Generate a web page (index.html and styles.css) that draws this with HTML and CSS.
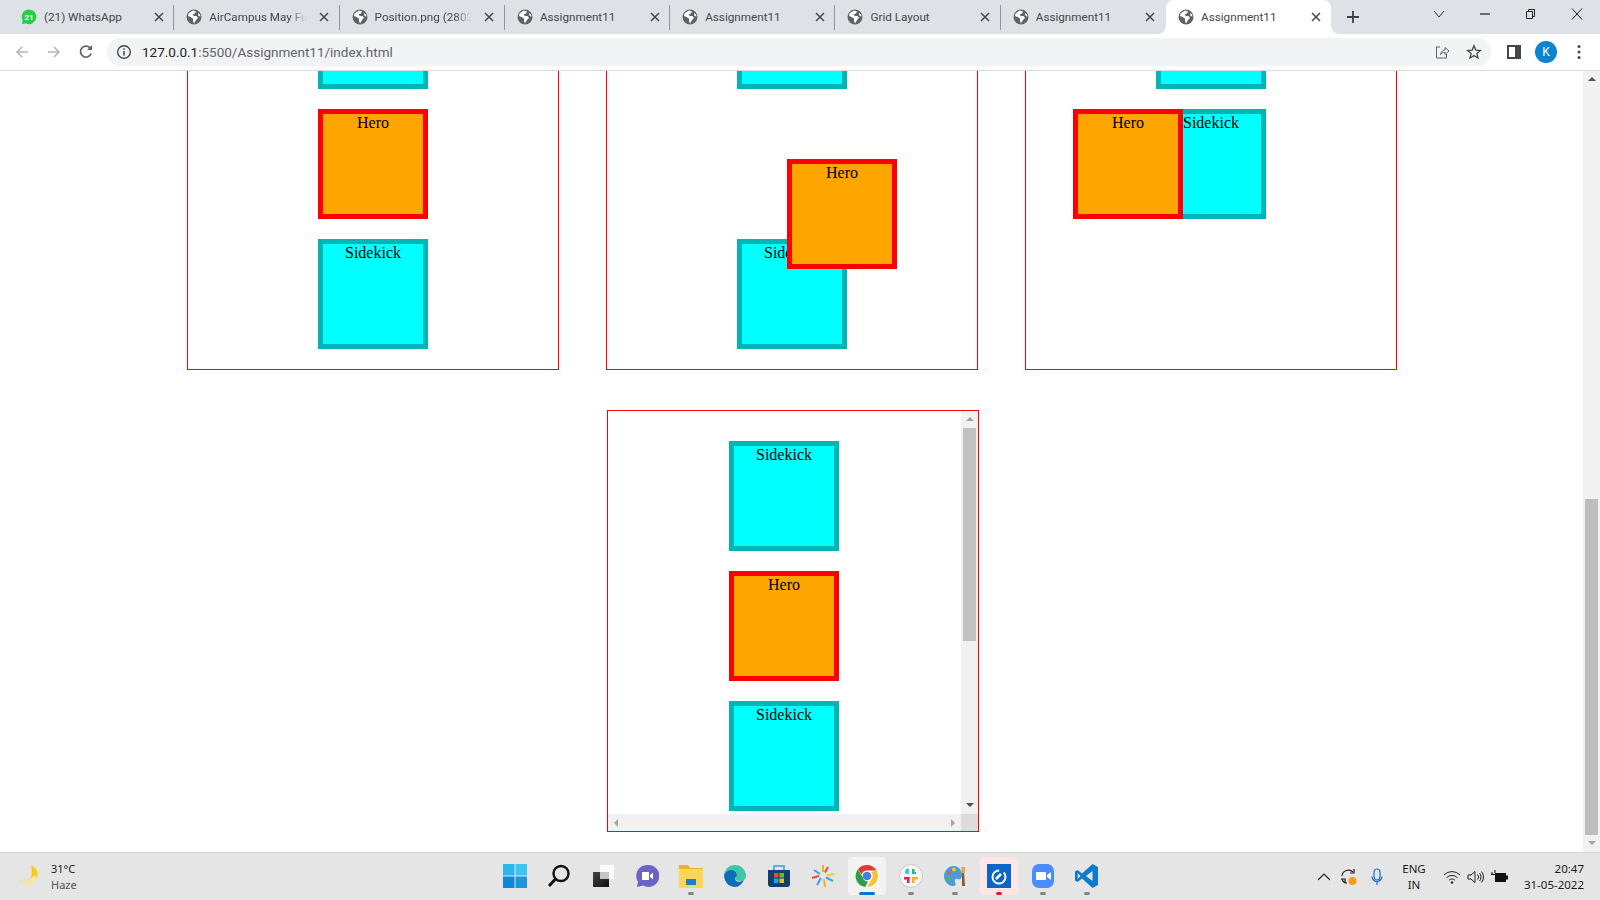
FILE: index.html
```html
<!DOCTYPE html>
<html lang="en">
<head>
    <meta charset="UTF-8">
    <meta name="viewport" content="width=device-width, initial-scale=1.0">
    <title>Assignment11</title>
    <link rel="stylesheet" href="styles.css">
</head>
<body>
    <svg class="defs" width="0" height="0">
        <symbol id="globe" viewBox="0 0 16 16">
            <circle cx="8" cy="8" r="7.5" fill="#5f6368"/>
            <path d="M7 1.5 4.5 3 2.500 4.500 2 7l2.500 1L7 9.500V12l1 2.500L10 11l2-2-1.500-2H8L6.500 5.500 9 4.500 10 2.500z" fill="#fff"/>
            <path d="M12 4l2 1.500.5 2L12.500 7z" fill="#fff"/>
        </symbol>
        <symbol id="close" viewBox="0 0 10 10">
            <path d="M1 1l8 8M9 1l-8 8" stroke="#45474a" stroke-width="1.500" fill="none"/>
        </symbol>
    </svg>

    <!-- Tab strip -->
    <div class="tabstrip">
        <div class="tab">
            <svg class="favicon" viewBox="0 0 16 16"><path d="M8 .5a7.300 7.300 0 0 0-6.300 11L.8 15.300l3.900-1A7.300 7.300 0 1 0 8 .5z" fill="#25cf43"/><text x="8" y="11" class="wa-count">21</text></svg>
            <span class="tab-title">(21) WhatsApp</span>
            <svg class="tab-close"><use href="#close"/></svg>
        </div>
        <div class="tab">
            <svg class="favicon"><use href="#globe"/></svg>
            <span class="tab-title fade">AirCampus May Full Stack</span>
            <svg class="tab-close"><use href="#close"/></svg>
        </div>
        <div class="tab">
            <svg class="favicon"><use href="#globe"/></svg>
            <span class="tab-title fade">Position.png (2802×1608)</span>
            <svg class="tab-close"><use href="#close"/></svg>
        </div>
        <div class="tab">
            <svg class="favicon"><use href="#globe"/></svg>
            <span class="tab-title">Assignment11</span>
            <svg class="tab-close"><use href="#close"/></svg>
        </div>
        <div class="tab">
            <svg class="favicon"><use href="#globe"/></svg>
            <span class="tab-title">Assignment11</span>
            <svg class="tab-close"><use href="#close"/></svg>
        </div>
        <div class="tab">
            <svg class="favicon"><use href="#globe"/></svg>
            <span class="tab-title">Grid Layout</span>
            <svg class="tab-close"><use href="#close"/></svg>
        </div>
        <div class="tab no-sep">
            <svg class="favicon"><use href="#globe"/></svg>
            <span class="tab-title">Assignment11</span>
            <svg class="tab-close"><use href="#close"/></svg>
        </div>
        <div class="tab active">
            <svg class="favicon"><use href="#globe"/></svg>
            <span class="tab-title">Assignment11</span>
            <svg class="tab-close"><use href="#close"/></svg>
        </div>
        <svg class="newtab" viewBox="0 0 14 14"><path d="M7 1v12M1 7h12" stroke="#3c4043" stroke-width="1.800"/></svg>
        <div class="window-btns">
            <svg class="win-btn" viewBox="0 0 46 16"><path d="M18 5l5 6 5-6" stroke="#333" fill="none"/></svg>
            <svg class="win-btn" viewBox="0 0 46 16"><path d="M18 8h10" stroke="#222" stroke-width="1.200"/></svg>
            <svg class="win-btn" viewBox="0 0 46 16"><path d="M18.500 5.500h6v7h-6zM20.500 5.500v-2h6v7h-2" stroke="#222" fill="none"/></svg>
            <svg class="win-btn" viewBox="0 0 46 16"><path d="M18 2.500l10 11M28 2.500l-10 11" stroke="#222" fill="none"/></svg>
        </div>
    </div>

    <!-- Address bar -->
    <div class="toolbar">
        <svg class="tool" viewBox="0 0 16 16"><path d="M14 8H3M8 3L3 8l5 5" stroke="#b4b6b9" stroke-width="1.600" fill="none"/></svg>
        <svg class="tool" viewBox="0 0 16 16"><path d="M2 8h11M8 3l5 5-5 5" stroke="#b4b6b9" stroke-width="1.600" fill="none"/></svg>
        <svg class="tool" viewBox="0 0 16 16"><path d="M13.200 9.500A5.500 5.500 0 1 1 12 3.800" stroke="#5f6368" stroke-width="1.700" fill="none"/><path d="M14 1v5H9z" fill="#5f6368"/></svg>
        <div class="omnibox">
            <svg class="info" viewBox="0 0 16 16"><circle cx="8" cy="8" r="6.300" stroke="#45474a" stroke-width="1.400" fill="none"/><path d="M8 7v4.500M8 4.300v1.500" stroke="#45474a" stroke-width="1.500"/></svg>
            <span class="url"><span class="host">127.0.0.1</span>:5500/Assignment11/index.html</span>
            <svg class="omni-icon" viewBox="0 0 16 16"><path d="M6 3H2.500v11h10V10M6.500 10.500C7 7.500 9 6 11 6V3.500L15 7l-4 3.500V8.500c-2 0-3.500.5-4.500 2z" stroke="#5f6368" fill="none"/></svg>
            <svg class="omni-icon" viewBox="0 0 16 16"><path d="M8 1.800l1.800 4.300 4.600.4-3.500 3 1.100 4.500L8 11.600 4 14l1.100-4.500-3.500-3 4.600-.4z" stroke="#45474a" stroke-width="1.300" fill="none"/></svg>
        </div>
        <svg class="panel-icon" viewBox="0 0 14 14"><path d="M1 1h12v12H1z" fill="none" stroke="#45474a" stroke-width="2"/><path d="M8 1h5v12H8z" fill="#45474a"/></svg>
        <div class="avatar">K</div>
        <svg class="menu" viewBox="0 0 4 16"><circle cx="2" cy="2.500" r="1.500"/><circle cx="2" cy="8" r="1.500"/><circle cx="2" cy="13.500" r="1.500"/></svg>
    </div>

    <!-- Page area -->
    <div class="viewport">
        <main class="page">
            <div class="row">
                <section class="panel">
                    <div class="box sidekick">Sidekick</div>
                    <div class="box hero">Hero</div>
                    <div class="box sidekick">Sidekick</div>
                </section>
                <section class="panel">
                    <div class="box sidekick">Sidekick</div>
                    <div class="box hero hero-relative">Hero</div>
                    <div class="box sidekick">Sidekick</div>
                </section>
                <section class="panel">
                    <div class="box sidekick">Sidekick</div>
                    <div class="box hero hero-absolute">Hero</div>
                    <div class="box sidekick">Sidekick</div>
                </section>
            </div>
            <div class="row row-second">
                <section class="panel panel-scroll">
                    <div class="scroll-content">
                        <div class="box sidekick">Sidekick</div>
                        <div class="box hero">Hero</div>
                        <div class="box sidekick">Sidekick</div>
                    </div>
                    <div class="mini-vbar">
                        <span class="arrow up light"></span>
                        <div class="mini-track"><div class="mini-thumb"></div></div>
                        <span class="arrow down dark"></span>
                    </div>
                    <div class="mini-hbar">
                        <span class="arrow left"></span>
                        <span class="arrow right"></span>
                    </div>
                    <div class="mini-corner"></div>
                </section>
            </div>
        </main>
        <div class="scrollbar">
            <span class="arrow up dark"></span>
            <div class="scroll-track"><div class="scroll-thumb"></div></div>
            <span class="arrow down light"></span>
        </div>
    </div>

    <!-- Windows taskbar -->
    <footer class="taskbar">
        <div class="weather">
            <svg class="moon" viewBox="0 0 24 24"><path d="M13 1c5 2 8 7 6 13-1 4-5 7-9 7-4 0-7-2-8-4 5 1 9 0 11-4 1-4 1-8 0-12z" fill="#f8cb12"/><path d="M2 16c3 1 8 1 11-2 2-1 3-2 4-3 2 2 2 5 1 6-2 3-5 4-8 4-4 0-7-2-8-5z" fill="#f3e6ae"/></svg>
            <div class="weather-text">
                <span class="temp">31°C</span>
                <span class="haze">Haze</span>
            </div>
        </div>
        <div class="apps">
            <div class="app">
                <svg viewBox="0 0 24 24"><path d="M0 0h11.500v11.500H0z" fill="#29b6ee"/><path d="M12.500 0H24v11.500H12.500z" fill="#3fc4f4"/><path d="M0 12.500h11.500V24H0z" fill="#0e87d8"/><path d="M12.500 12.500H24V24H12.500z" fill="#1b95e0"/></svg>
            </div>
            <div class="app">
                <svg viewBox="0 0 24 24"><circle cx="14" cy="9.500" r="7.500" fill="none" stroke="#111" stroke-width="2.400"/><path d="M8.500 15L2 22" stroke="#111" stroke-width="3"/></svg>
            </div>
            <div class="app">
                <svg viewBox="0 0 24 24"><defs><linearGradient id="tv" x1="0" y1="0" x2="1" y2="1"><stop offset="0" stop-color="#444"/><stop offset="1" stop-color="#111"/></linearGradient></defs><path d="M9 1h14v14H9z" fill="#fbfbfb"/><path d="M2 8h16v15H2z" fill="url(#tv)"/><path d="M9 8h9v7H9z" fill="#c4c4c4"/></svg>
            </div>
            <div class="app">
                <svg viewBox="0 0 24 24"><path d="M12 1a11 11 0 0 0-9 17l-1 5 6-1.500A11 11 0 1 0 12 1z" fill="#6c63c7"/><path d="M7 8h7v8H7zM15 11l3-2.500v7L15 13z" fill="#fff"/></svg>
            </div>
            <div class="app has-dot">
                <svg viewBox="0 0 24 24"><path d="M0 1h9l2 3h13v19H0z" fill="#e9b422"/><path d="M0 5h24v19H0z" fill="#fcd757"/><path d="M7 15h10v6H7z" fill="#1d7ec5"/></svg>
                <i class="dot"></i>
            </div>
            <div class="app">
                <svg viewBox="0 0 24 24"><path d="M12 1a11 11 0 0 1 11 11c0 3-3 5-6 5-3 0-5-1-5-3 0-1 2-1 2-3 0-3-3-5-6-5C5 6 2 8 1 11 2 5 6 1 12 1z" fill="#3cc8a5"/><path d="M1 11c1-3 4-5 7-5 3 0 6 2 6 5 0 2-2 2-2 3 0 4 4 5 9 2-2 4-5 7-9 7C6 23 1 18 1 11z" fill="#0f6cb7"/></svg>
            </div>
            <div class="app">
                <svg viewBox="0 0 24 24"><path d="M1 6h22v14a3 3 0 0 1-3 3H4a3 3 0 0 1-3-3z" fill="#123f72"/><path d="M7 6V2h10v4" fill="none" stroke="#29a8e0" stroke-width="1.600"/><path d="M7 9h4.500v4.500H7z" fill="#ea4b25"/><path d="M12.500 9H17v4.500h-4.500z" fill="#6bbb2d"/><path d="M7 14.500h4.500V19H7z" fill="#19a5e8"/><path d="M12.500 14.500H17V19h-4.500z" fill="#fcb913"/></svg>
            </div>
            <div class="app">
                <svg viewBox="0 0 24 24" fill="none" stroke-width="2"><path d="M12 1v7" stroke="#f5b01b"/><path d="M17 3l-3 5.500" stroke="#e94e3d"/><path d="M23 10l-7 1.500" stroke="#f5c83a"/><path d="M22 17l-7-3.500" stroke="#3aa7e0"/><path d="M14 23l-1-8" stroke="#f5b01b"/><path d="M6 21l4-7" stroke="#3aa7e0"/><path d="M1 14l7-2" stroke="#e94e3d"/><path d="M3 6l6 4" stroke="#3aa7e0"/></svg>
            </div>
            <div class="app app-active has-dot">
                <svg viewBox="0 0 24 24"><circle cx="12" cy="12" r="11.500" fill="#fff"/><path d="M12 1a11 11 0 0 1 9.500 5.500H12a5.500 5.500 0 0 0-5.300 4L3 5.200A11 11 0 0 1 12 1z" fill="#e33b2e"/><path d="M21.500 6.500A11 11 0 0 1 12 23l4.700-8.200A5.500 5.500 0 0 0 16 8z" fill="#fbc02d"/><path d="M3 5.200l4.800 8.300A5.500 5.500 0 0 0 13 17.400L10.300 23A11 11 0 0 1 3 5.200z" fill="#2f9e46"/><circle cx="12" cy="12" r="4.300" fill="#3d7fe6"/></svg>
                <i class="dot dot-wide"></i>
            </div>
            <div class="app has-dot">
                <svg viewBox="0 0 24 24"><circle cx="12" cy="12" r="11.500" fill="#f6f6f6" stroke="#c8c8c8"/><path d="M10 5v5H7.500a2.500 2.500 0 1 1 2.500-5z" fill="#36c5f0"/><path d="M14 8h3v2h-3z" fill="#2eb67d"/><path d="M13 5h2.500v5H13z" fill="#2eb67d"/><path d="M14 13h5v2.500h-5z" fill="#ecb22e"/><path d="M13 13h2.500v6H13z" fill="#ecb22e"/><path d="M5 13h5.500v2.500H5z" fill="#e01e5a"/><path d="M8 13h2.500v6H8z" fill="#e01e5a"/></svg>
                <i class="dot"></i>
            </div>
            <div class="app has-dot">
                <svg viewBox="0 0 24 24"><path d="M11 2C5 2 1 7 1 12c0 6 5 10 9 10 3 0 3-2 2-4s1-4 3-3 4 0 4-4c0-5-4-9-8-9z" fill="#4a9bd8"/><circle cx="6" cy="9" r="2" fill="#e85a4f"/><circle cx="11" cy="5.500" r="2" fill="#f5c518"/><circle cx="5.500" cy="15" r="2" fill="#5bb44a"/><path d="M19 8l2 0 1 14h-3z" fill="#8a5a2c"/><path d="M18.500 3h3.500v6h-3.500z" fill="#e8a33a"/></svg>
                <i class="dot"></i>
            </div>
            <div class="app app-alert has-dot">
                <svg viewBox="0 0 24 24"><path d="M0 0h24v24H0z" fill="#0a66c9"/><circle cx="12" cy="13" r="6.500" fill="none" stroke="#fff" stroke-width="2" stroke-dasharray="30 5"/><path d="M9 15l5-5" stroke="#fff" stroke-width="2.500"/></svg>
                <i class="dot dot-red"></i>
            </div>
            <div class="app has-dot">
                <svg viewBox="0 0 24 24"><rect x="1" width="22" height="24" rx="7" fill="#4a8cff"/><path d="M5 8h9a1 1 0 0 1 1 1v7H6a1 1 0 0 1-1-1zM16 11l4-3v8l-4-3z" fill="#fff"/></svg>
                <i class="dot"></i>
            </div>
            <div class="app has-dot">
                <svg viewBox="0 0 24 24"><path d="M17.500 0L23 3v18l-5.500 3L7 14.500 2.500 18 0 16.500V7.500L2.500 6 7 9.500zM17.500 7L11 12l6.500 5zM2.700 9v6L5.500 12z" fill="#0c7bc9"/></svg>
                <i class="dot"></i>
            </div>
        </div>
        <div class="tray">
            <svg class="tray-chevron" viewBox="0 0 14 8"><path d="M1 7l6-6 6 6" stroke="#222" stroke-width="1.200" fill="none"/></svg>
            <svg class="tray-sync" viewBox="0 0 18 18"><path d="M2 8a6.500 6.500 0 0 1 11-4M2 11c.5 2 2 4 5 4" stroke="#222" stroke-width="1.200" fill="none"/><path d="M14 1v4h-4M1 11h4v4" stroke="#222" stroke-width="1.200" fill="none"/><circle cx="12.500" cy="13" r="4" fill="#f59a1c"/></svg>
            <svg class="tray-mic" viewBox="0 0 12 18"><rect x="3" y="1" width="6" height="11" rx="3" fill="none" stroke="#1d6fc4" stroke-width="1.200"/><path d="M1 8.500a5 5 0 0 0 10 0M6 13.500V17" fill="none" stroke="#1d6fc4" stroke-width="1.200"/></svg>
            <div class="lang"><span>ENG</span><span>IN</span></div>
            <svg class="tray-wifi" viewBox="0 0 18 14"><path d="M1 5a11 11 0 0 1 16 0M3.500 7.800a7.500 7.500 0 0 1 11 0M6 10.300a4 4 0 0 1 6 0" stroke="#222" fill="none"/><circle cx="9" cy="12.500" r="1.200" fill="#222"/></svg>
            <svg class="tray-sound" viewBox="0 0 18 14"><path d="M1 5v4h3l4 3.500v-11L4 5z" stroke="#222" fill="none"/><path d="M10.500 4.500a3.500 3.500 0 0 1 0 5M12.500 3a6 6 0 0 1 0 8M14.500 1.500a8.500 8.500 0 0 1 0 11" stroke="#222" fill="none"/></svg>
            <svg class="tray-battery" viewBox="0 0 18 14"><path d="M4 3h11v9H4z" fill="#111"/><path d="M15 5.500h2v4h-2z" fill="#111"/><path d="M1 2v3M4 0v3M0 4.500h6" stroke="#111"/></svg>
            <div class="clock"><span>20:47</span><span>31-05-2022</span></div>
        </div>
    </footer>
</body>
</html>
```

FILE: styles.css
```css
* {
    box-sizing: border-box;
}
html, body {
    height: 100%;
}
body {
    margin: 0;
    width: 1600px;
    height: 900px;
    overflow: hidden;
    display: flex;
    flex-direction: column;
    font-family: "Liberation Serif", serif;
    background-color: #fff;
}
.defs {
    position: absolute;
}

/* Tab strip */
.tabstrip {
    height: 34px;
    flex: none;
    display: flex;
    align-items: stretch;
    padding-left: 9px;
    background-color: #dee1e6;
    font-family: Roboto, sans-serif;
    font-size: 11.7px;
    color: #45474a;
}
.tab {
    width: 165.3px;
    flex: none;
    display: flex;
    align-items: center;
    padding-left: 12px;
    border-right: 1px solid #9a9da1;
    border-image: linear-gradient(#dee1e6 18%, #8f9296 18%, #8f9296 86%, #dee1e6 86%) 1;
}
.tab.no-sep {
    border-image: none;
    border-right-color: #dee1e6;
}
.tab.active {
    position: relative;
    background-color: #fff;
    border: none;
    border-radius: 8px 8px 0 0;
}
.tab.active::before, .tab.active::after {
    content: "";
    position: absolute;
    bottom: 0;
    width: 8px;
    height: 8px;
}
.tab.active::before {
    left: -8px;
    background: radial-gradient(circle at 0 0, #dee1e6 7.5px, #fff 8px);
}
.tab.active::after {
    right: -8px;
    background: radial-gradient(circle at 100% 0, #dee1e6 7.5px, #fff 8px);
}
.favicon {
    width: 16px;
    height: 16px;
    flex: none;
}
.wa-count {
    font-size: 8px;
    font-weight: bold;
    fill: #fff;
    text-anchor: middle;
    font-family: Roboto, sans-serif;
}
.tab-title {
    width: 109.7px;
    margin-left: 7px;
    white-space: nowrap;
    overflow: hidden;
}
.tab-title.fade {
    width: 97.7px;
    margin-right: 12px;
    -webkit-mask-image: linear-gradient(to right, #000 82%, transparent);
    mask-image: linear-gradient(to right, #000 82%, transparent);
}
.tab-close {
    width: 10px;
    height: 10px;
    flex: none;
}
.newtab {
    width: 14px;
    height: 14px;
    flex: none;
    margin: 10px 0 0 15px;
}
.window-btns {
    margin-left: auto;
    display: flex;
}
.win-btn {
    width: 46px;
    height: 16px;
    margin-top: 6px;
}

/* Toolbar */
.toolbar {
    height: 37px;
    flex: none;
    display: flex;
    align-items: center;
    padding: 0 0 1px 14px;
    background-color: #fff;
    border-bottom: 1px solid #dadce0;
}
.tool {
    width: 16px;
    height: 16px;
    flex: none;
    margin-right: 16px;
}
.omnibox {
    width: 1384px;
    height: 28px;
    flex: none;
    margin-left: -3px;
    display: flex;
    align-items: center;
    padding: 0 9px;
    background-color: #f1f3f4;
    border-radius: 14px;
}
.info {
    width: 16px;
    height: 16px;
    flex: none;
}
.url {
    margin-left: 10px;
    margin-right: auto;
    font-family: Roboto, sans-serif;
    font-size: 13.5px;
    color: #5f6368;
}
.host {
    color: #202124;
}
.omni-icon {
    width: 16px;
    height: 16px;
    flex: none;
    margin-left: 16px;
}
.panel-icon {
    width: 14px;
    height: 14px;
    flex: none;
    margin-left: 16px;
}
.avatar {
    width: 22px;
    height: 22px;
    flex: none;
    margin-left: 14px;
    border-radius: 50%;
    background-color: #0a84d0;
    color: #fff;
    font-family: Roboto, sans-serif;
    font-size: 12px;
    line-height: 22px;
    text-align: center;
}
.menu {
    width: 4px;
    height: 16px;
    flex: none;
    margin-left: 20px;
    fill: #45474a;
}

/* Page */
.viewport {
    height: 781px;
    flex: none;
    display: flex;
}
.page {
    flex: 1;
    overflow: hidden;
}
.row {
    display: flex;
    gap: 47px;
    padding-left: 187px;
    margin-top: -123px;
}
.row-second {
    margin-top: 40px;
    padding-left: 607px;
}
.panel {
    width: 372px;
    height: 422px;
    flex: none;
    position: relative;
    display: flex;
    flex-direction: column;
    align-items: center;
    gap: 20px;
    padding-top: 30px;
    border: 1px solid #f00;
}
.box {
    width: 110px;
    height: 110px;
    flex: none;
    border: 5px solid;
    font-size: 16px;
    text-align: center;
    color: #000;
}
.sidekick {
    background-color: #0ff;
    border-color: #00b5b5;
}
.hero {
    background-color: #ffa500;
    border-color: #f00;
}
.hero-relative {
    position: relative;
    left: 50px;
    top: 50px;
}
.hero-absolute {
    position: absolute;
    left: 47px;
    top: 160px;
}

/* Scrolling panel, scrollbars drawn by hand */
.panel-scroll {
    display: grid;
    grid-template-columns: 353px 17px;
    grid-template-rows: 403px 17px;
    align-items: stretch;
    gap: 0;
    padding: 0;
}
.scroll-content {
    overflow: hidden;
    display: flex;
    flex-direction: column;
    align-items: center;
    gap: 20px;
    padding: 30px 1px 0 0;
}
.mini-vbar, .scrollbar {
    display: flex;
    flex-direction: column;
    align-items: center;
    justify-content: space-between;
    background-color: #f1f1f1;
}
.mini-hbar {
    display: flex;
    align-items: center;
    justify-content: space-between;
    padding: 0 6px;
    background-color: #f1f1f1;
}
.mini-corner {
    background-color: #dcdcdc;
}
.mini-track, .scroll-track {
    flex: 1;
    width: 100%;
    display: flex;
    flex-direction: column;
    padding: 0 2px;
}
.mini-thumb {
    height: 213px;
    background-color: #c1c1c1;
}
.scrollbar {
    width: 17px;
    flex: none;
}
.scroll-track {
    justify-content: flex-end;
}
.scroll-thumb {
    height: 336px;
    background-color: #bebebe;
}
.arrow {
    width: 0;
    height: 0;
    flex: none;
    margin: 6px 0 7px;
    border-style: solid;
    border-color: transparent;
}
.arrow.up {
    border-width: 0 4px 4px;
    border-bottom-color: #a3a3a3;
}
.arrow.down {
    border-width: 4px 4px 0;
    border-top-color: #a3a3a3;
}
.arrow.up.dark {
    border-bottom-color: #505050;
}
.arrow.down.dark {
    border-top-color: #505050;
}
.arrow.left {
    margin: 0;
    border-width: 4px 4px 4px 0;
    border-right-color: #a3a3a3;
}
.arrow.right {
    margin: 0;
    border-width: 4px 0 4px 4px;
    border-left-color: #a3a3a3;
}

/* Taskbar */
.taskbar {
    height: 48px;
    flex: none;
    display: flex;
    padding-top: 4px;
    background-color: #e5e5e5;
    border-top: 1px solid #d6d6d6;
    font-family: "Noto Sans", sans-serif;
    color: #1a1a1a;
}
.weather {
    width: 493px;
    flex: none;
    display: flex;
    align-items: center;
    height: 38px;
    padding-left: 18px;
}
.moon {
    width: 24px;
    height: 24px;
    flex: none;
}
.weather-text {
    display: flex;
    flex-direction: column;
    margin: 1px 0 0 9px;
    font-size: 11px;
    line-height: 16px;
}
.haze {
    color: #555;
}
.apps {
    display: flex;
}
.app {
    width: 38px;
    height: 38px;
    margin: 0 3px;
    flex: none;
    position: relative;
    display: flex;
    align-items: center;
    justify-content: center;
    border-radius: 4px;
}
.app svg {
    width: 24px;
    height: 24px;
}
.app-active {
    background-color: #f3f3f3;
}
.app-alert {
    background-color: #fde6e6;
}
.dot {
    position: absolute;
    left: 16px;
    bottom: 0;
    width: 6px;
    height: 3px;
    border-radius: 2px;
    background-color: #858585;
}
.dot-wide {
    left: 11px;
    width: 16px;
    background-color: #0078d4;
}
.dot-red {
    background-color: #d3232a;
}
.tray {
    margin-left: auto;
    display: flex;
    align-items: center;
    height: 38px;
    padding: 1px 16px 0 0;
    font-size: 11.500px;
}
.tray-chevron {
    width: 14px;
    height: 8px;
}
.tray-sync {
    width: 18px;
    height: 18px;
    margin-left: 9px;
}
.tray-mic {
    width: 12px;
    height: 18px;
    margin-left: 13px;
}
.lang {
    width: 40px;
    margin-left: 11px;
    display: flex;
    flex-direction: column;
    align-items: center;
    line-height: 16px;
}
.tray-wifi, .tray-sound, .tray-battery {
    width: 18px;
    height: 14px;
}
.tray-wifi {
    margin-left: 9px;
}
.tray-sound, .tray-battery {
    margin-left: 6px;
}
.clock {
    width: 65px;
    margin-left: 10px;
    display: flex;
    flex-direction: column;
    align-items: flex-end;
    line-height: 16px;
}
```
